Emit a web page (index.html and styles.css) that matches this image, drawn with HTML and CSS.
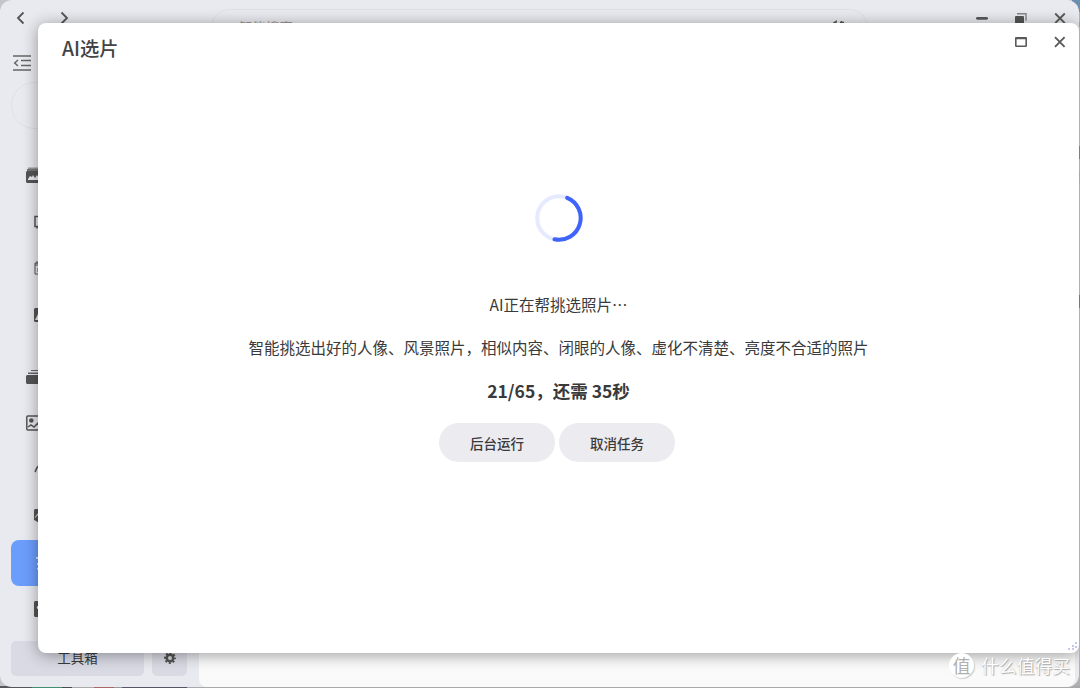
FILE: index.html
```html
<!DOCTYPE html>
<html lang="zh-CN">

<head>
    <meta charset="UTF-8">
    <meta name="viewport" content="width=device-width, initial-scale=1.0">
    <title>AI选片</title>
    <link rel="stylesheet" href="styles.css">
</head>

<body>

    <div class="window">
        <aside class="sidebar">
            <div class="nav-arrows">
                <svg width="10" height="14" viewBox="0 0 10 14"><path d="M7.5 1.5 2 7l5.5 5.5"/></svg>
                <svg width="10" height="14" viewBox="0 0 10 14"><path d="M2.500 1.500 8 7l-5.500 5.500"/></svg>
            </div>
            <svg class="collapse" width="18" height="16" viewBox="0 0 18 16">
                <path d="M0 1h18M8 5.500h10M8 10.500h10M0 15h18M5 5 1.700 8 5 11"/>
            </svg>
            <div class="user-pill"></div>

            <!-- 图库 -->
            <ul class="menu">
                <li class="main">
                    <svg width="16" height="16" viewBox="0 0 16 16"><path fill="#98989b" d="M2 .5h12V2H2z"/><path fill="#77777a" d="M1 2h14v2H1z"/><path fill="#555" fill-rule="evenodd" d="M1 4h14l1 1v10l-1 1H1l-1-1V5zm1 9h12v-1l-3-4-2 3-2-3-1 2-2-1-2 3z"/></svg>
                </li>
                <li>
                    <svg width="14" height="14" viewBox="0 0 14 14"><path class="line" d="M1 1.500h12v10H1zM3 12v1.500"/></svg>
                </li>
                <li>
                    <svg width="14" height="14" viewBox="0 0 14 14"><path class="line thin" d="M1 2h12v11H1zM1 4h12M3 0v3M3 8h3M3 10h3"/></svg>
                </li>
                <li>
                    <svg width="14" height="14" viewBox="0 0 14 14"><path fill="#555" fill-rule="evenodd" d="M1 0h12v14H1l-1-1V1zm0 12h8L5 4z"/></svg>
                </li>
            </ul>

            <!-- 相册 -->
            <ul class="menu albums">
                <li class="main">
                    <svg width="16" height="16" viewBox="0 0 16 16"><path fill="#666" d="M5 1h8v1H5zM2 3.500h12V5H2z"/><path fill="#555" d="M1 6h14l1 1v7l-1 1H1l-1-1V7z"/></svg>
                </li>
                <li class="main">
                    <svg width="16" height="16" viewBox="0 0 16 16"><rect class="line" x=".8" y="1" width="15" height="14" rx="1"/><circle cx="5.300" cy="5.500" r="2.300" fill="#555"/><path class="line" d="m2 12 3-2 3 2 4-4 3 3"/></svg>
                </li>
                <li>
                    <svg width="14" height="14" viewBox="0 0 14 14"><path class="line" d="M1 9C2 7.500 2.500 3.500 5 3h4"/></svg>
                </li>
                <li>
                    <svg width="14" height="14" viewBox="0 0 14 14"><path fill="#555" fill-rule="evenodd" d="M1 0h12v12H5v2L2 12 0 11V1zM1 8l4-5v2L1 9z"/></svg>
                </li>
                <li class="active">
                    <svg width="14" height="14" viewBox="0 0 14 14"><path fill="#e4ecff" d="M2 1h3v2H4l-2-.5zM3 7h1l1 2H3zM3 12h2v1.500H3z"/></svg>
                </li>
                <li>
                    <svg width="14" height="16" viewBox="0 0 14 16"><path fill="#555" d="M1 0h12v16H1l-1-1V1z"/><circle cx="4.500" cy="6.500" r="1.800" fill="#e9eaef"/></svg>
                </li>
            </ul>

            <div class="tools">
                <button class="toolbox">工具箱</button>
                <button class="settings">
                    <svg width="12" height="12" viewBox="0 0 12 12"><circle class="teeth" cx="6" cy="6" r="5"/><circle class="wheel" cx="6" cy="6" r="3.300"/></svg>
                </button>
            </div>
        </aside>

        <main class="content">
            <header class="topbar">
                <div class="search">
                    <span>智能搜索</span>
                    <svg width="14" height="14" viewBox="0 0 14 14"><path class="line" d="m2 3.500 3-2v2M9 2.500h4M10.500 1v3"/></svg>
                </div>
                <div class="controls">
                    <svg width="12" height="12" viewBox="0 0 12 12"><path d="M1.400 6.300h9.200" stroke-width="2.800" stroke-linecap="round"/></svg>
                    <svg width="12" height="12" viewBox="0 0 12 12"><path d="M2 1.800h9v7" stroke-width="1.400" stroke="#858588"/><rect x="0" y="4" width="9" height="8" rx="1" fill="#555" stroke="none"/></svg>
                    <svg width="12" height="12" viewBox="0 0 12 12"><path d="m1.200 1.500 9.600 9.600M10.800 1.500l-9.600 9.600"/></svg>
                </div>
            </header>
            <div class="gallery"></div>
        </main>
    </div>

    <div class="dialog">
        <div class="dialog-header">
            <h1>AI选片</h1>
            <div class="controls">
                <svg width="12" height="12" viewBox="0 0 12 12"><rect x=".8" y="1.700" width="10.400" height="8.600" rx=".5" stroke-width="1.600"/><path d="M.5 2.300h11"/></svg>
                <svg width="12" height="12" viewBox="0 0 12 12"><path d="m1 1.200 9.600 9.600M10.600 1.200 1 10.800"/></svg>
            </div>
        </div>
        <div class="dialog-body">
            <svg class="spinner" width="48" height="48" viewBox="0 0 48 48">
                <circle cx="24" cy="24" r="21.800"/>
                <path d="M32.200 3.800A21.800 21.800 0 0 1 19.500 45.300"/>
            </svg>
            <p class="message">AI正在帮挑选照片⋯</p>
            <p class="description">智能挑选出好的人像、风景照片，相似内容、闭眼的人像、虚化不清楚、亮度不合适的照片</p>
            <p class="progress">21/65，还需 35秒</p>
            <div class="buttons">
                <button>后台运行</button>
                <button>取消任务</button>
            </div>
        </div>
        <svg class="grip" width="9" height="9" viewBox="0 0 9 9"><path d="M7 0h2v2H7zM4 3h2v2H4zM7 4h2v2H7zM0 6h2v2H0zM4 6h2v2H4z"/></svg>
    </div>

    <div class="watermark">
        <span class="badge">值</span>
        <span>什么值得买</span>
    </div>

</body>

</html>
```
FILE: styles.css
```css
* {
    box-sizing: border-box;
}

body {
    margin: 0;
    width: 1080px;
    height: 688px;
    position: relative;
    overflow: hidden;
    font-family: "Noto Sans CJK SC", sans-serif;
    color: #3a3a3a;
    /* 窗口边缘露出的桌面 */
    background:
        linear-gradient(90deg, #55565a 32px, #3f8f70 32px 62px, #4a4b50 62px 72px, #aaa 72px 94px, #a66 94px 114px, #999 114px 122px, #556 122px 187px, #a9a9a9 187px) 0 100% / 1080px 2px no-repeat,
        linear-gradient(#6c8fb0 12px, #b0b0b2 12px 22px, #a98 22px 27px, #b0b0b2 27px 146px, #4d8abf 146px 159px, #b0b0b2 159px 171px, #bda574 171px 183px, #b0b0b2 183px 295px, #777684 295px 308px, #b0b0b2 308px) 100% 0 / 8px 688px no-repeat,
        #c2c5cb;
}

svg {
    display: block;
    fill: none;
}

button {
    border: 0;
    padding: 0;
    font-family: inherit;
    color: #3a3a3a;
}

.line {
    stroke: #555;
    stroke-width: 1.5;
}

.thin {
    stroke-width: 1;
}

.window {
    display: flex;
    width: 1079px;
    height: 687px;
    border-radius: 12px;
    overflow: hidden;
    background: #e9eaef;
}

/* 侧边栏 */
.sidebar {
    width: 199px;
    flex: none;
    padding: 11px 11px 0;
    display: flex;
    flex-direction: column;
}

.nav-arrows {
    display: flex;
    gap: 33px;
    padding-left: 5px;
    height: 14px;
}

.nav-arrows path {
    stroke: #555;
    stroke-width: 1.8;
}

.collapse {
    margin: 30px 0 11px 2px;
}

.collapse path {
    stroke: #666;
    stroke-width: 1.5;
}

.user-pill {
    flex: none;
    height: 47px;
    border: 1px solid #dfe0e8;
    border-radius: 24px;
}

.menu {
    list-style: none;
    margin: 23px 0 0;
    padding: 0;
}

.menu li {
    height: 46.5px;
    display: flex;
    align-items: center;
    padding-left: 23px;
    border-radius: 8px;
}

.menu li.main {
    padding-left: 15px;
}

.menu.albums {
    margin-top: 15.6px;
}

.menu li.active {
    background: #6b9efc;
}

.tools {
    display: flex;
    gap: 8px;
    margin-top: 8.4px;
}

.tools button {
    height: 35px;
    border-radius: 5px;
    background: #dadae4;
    font-size: 13.5px;
}

.tools .toolbox {
    width: 133px;
    padding-bottom: 2px;
}

.settings {
    width: 35px;
    display: flex;
    align-items: center;
    justify-content: center;
}

.teeth {
    stroke: #555;
    stroke-width: 2;
    stroke-dasharray: 2 1.927;
    stroke-dashoffset: 1;
}

.wheel {
    stroke: #555;
    stroke-width: 2.6;
}

.content {
    flex: 1;
    display: flex;
    flex-direction: column;
}

.topbar {
    height: 56px;
    display: flex;
    justify-content: space-between;
    align-items: flex-start;
    padding: 9px 13px 0 12px;
}

.search {
    width: 657px;
    height: 37px;
    border: 1px solid #dedfe5;
    border-radius: 19px;
    padding: 0 22px 2px 27px;
    display: flex;
    align-items: center;
    justify-content: space-between;
    font-size: 13.5px;
    color: #999;
}

.controls {
    display: flex;
    gap: 27px;
    padding-top: 3px;
}

.controls svg {
    stroke: #5a5a5a;
    stroke-width: 1.9;
}

.gallery {
    flex: 1;
    background: #fafafa;
    border-radius: 8px;
    margin-right: 4px;
}

/* 弹窗 */
.dialog {
    position: absolute;
    left: 38px;
    top: 23px;
    width: 1041px;
    height: 630px;
    background: #fff;
    border-radius: 8px;
    box-shadow: 0 2px 16px rgba(0, 0, 0, 0.38);
    clip-path: inset(-30px 0 -40px -40px);
}

.dialog-header {
    display: flex;
    justify-content: space-between;
    padding: 10px 13px 0 24px;
}

.dialog-header h1 {
    margin: 0;
    font-size: 19.3px;
    font-weight: 500;
    line-height: 31px;
    color: #444;
}

.dialog-body {
    display: flex;
    flex-direction: column;
    align-items: center;
    padding-top: 130px;
}

.spinner {
    stroke: #e6eaff;
    stroke-width: 4;
}

.spinner path {
    stroke: #3f63fb;
    stroke-linecap: round;
}

.dialog p {
    margin: 0;
    font-size: 15.5px;
    line-height: 24px;
}

.dialog .message {
    margin-top: 50px;
}

.dialog .description {
    margin-top: 19px;
}

.dialog .progress {
    margin-top: 20px;
    font-size: 17.5px;
    font-weight: 700;
}

.buttons {
    display: flex;
    gap: 4px;
    margin-top: 20px;
    padding-right: 3px;
}

.buttons button {
    width: 116px;
    height: 39px;
    border-radius: 20px;
    background: #ecebf0;
    font-size: 13.5px;
    font-weight: 500;
}

.grip {
    position: absolute;
    right: 2px;
    bottom: 2px;
    fill: #c3c8ee;
}

.watermark {
    position: absolute;
    right: 10px;
    bottom: 10px;
    display: flex;
    align-items: center;
    gap: 7px;
    font-size: 17.8px;
    line-height: 26px;
    color: #fff;
    text-shadow: 1px 1px 1px #aaa, 0 0 1px #bbb;
}

.badge {
    width: 25px;
    height: 25px;
    border-radius: 50%;
    background: #fff;
    color: #b0b0b0;
    text-align: center;
    text-shadow: none;
    line-height: 24px;
    box-shadow: 1px 1px 1px #ccc;
}
```
